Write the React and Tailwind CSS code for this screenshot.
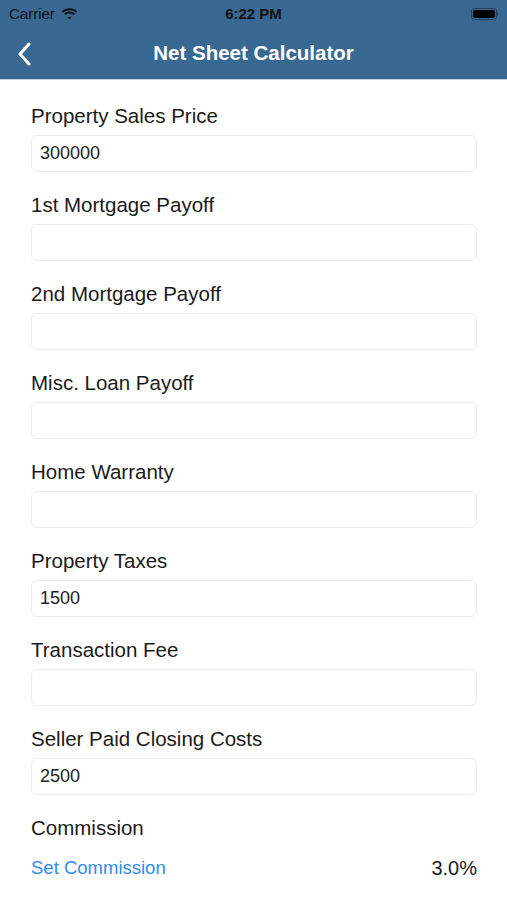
import React from 'react';

const fields = [
    { label: 'Property Sales Price', value: '300000' },
    { label: '1st Mortgage Payoff', value: '' },
    { label: '2nd Mortgage Payoff', value: '' },
    { label: 'Misc. Loan Payoff', value: '' },
    { label: 'Home Warranty', value: '' },
    { label: 'Property Taxes', value: '1500' },
    { label: 'Transaction Fee', value: '' },
    { label: 'Seller Paid Closing Costs', value: '2500' },
];

function Wifi() {
    return (
        <svg width="17" height="12" viewBox="0 0 17 12" className="ml-[6px]">
            <path d="M8.5 2.2c2.5 0 4.8 1 6.5 2.6l1.3-1.4C14.2 1.5 11.5.3 8.5.3S2.8 1.5.7 3.4L2 4.8c1.7-1.6 4-2.6 6.5-2.6z" fill="#111" />
            <path d="M8.5 5.5c1.6 0 3 .6 4.1 1.6l1.3-1.4C12.5 4.4 10.6 3.6 8.5 3.6S4.5 4.4 3.1 5.7l1.3 1.4c1.1-1 2.5-1.6 4.1-1.6z" fill="#111" />
            <path d="M8.5 8.8c.8 0 1.4.3 1.9.7L8.5 11.6 6.6 9.5c.5-.4 1.1-.7 1.9-.7z" fill="#111" />
        </svg>
    );
}

export default function App() {
    return (
        <div className="w-[507px] h-[900px] bg-white overflow-hidden" style={{ fontFamily: '"Liberation Sans", Arial, sans-serif' }}>
            <header className="bg-[#396892] border-b border-[#c9d7e4]">
                <div className="h-[28px] px-[9px] flex items-center justify-between relative">
                    <div className="flex items-center text-[15px] text-[#111]">
                        Carrier
                        <Wifi />
                    </div>
                    <span className="absolute left-1/2 -translate-x-1/2 text-[15px] font-bold text-[#111]">6:22 PM</span>
                    <div className="flex items-center">
                        <div className="w-[26px] h-[12px] rounded-[3px] border border-[#23415c] p-[1px]">
                            <div className="w-full h-full rounded-[2px] bg-black" />
                        </div>
                        <div className="w-[1.5px] h-[4px] bg-[#23415c] rounded-r-sm" />
                    </div>
                </div>
                <div className="h-[51px] flex items-center relative">
                    <svg width="14" height="24" viewBox="0 0 14 24" className="ml-[17px]">
                        <path d="M12 2 L3 12 L12 22" fill="none" stroke="white" strokeWidth="3" strokeLinecap="round" strokeLinejoin="round" />
                    </svg>
                    <span className="absolute left-1/2 -translate-x-1/2 text-white text-[20.5px] font-bold">Net Sheet Calculator</span>
                </div>
            </header>

            <main className="pl-[31px] pr-[30px] pt-[24px] flex flex-col gap-[21px]">
                {fields.map((f) => (
                    <div key={f.label} className="flex flex-col gap-[7px]">
                        <label className="text-[20.5px] leading-[24px] text-[#1a1a1a]">{f.label}</label>
                        <div className="h-[37px] rounded-[6px] border border-[#ececec] flex items-center px-[8px] text-[18px] text-[#222]">
                            {f.value}
                        </div>
                    </div>
                ))}
                <div className="flex flex-col gap-[13px]">
                    <span className="text-[20.5px] leading-[24px] text-[#1a1a1a]">Commission</span>
                    <div className="flex items-center justify-between">
                        <span className="text-[18.5px] text-[#2f8cf0]">Set Commission</span>
                        <span className="text-[20px] text-[#1a1a1a]">3.0%</span>
                    </div>
                </div>
            </main>
        </div>
    );
}
